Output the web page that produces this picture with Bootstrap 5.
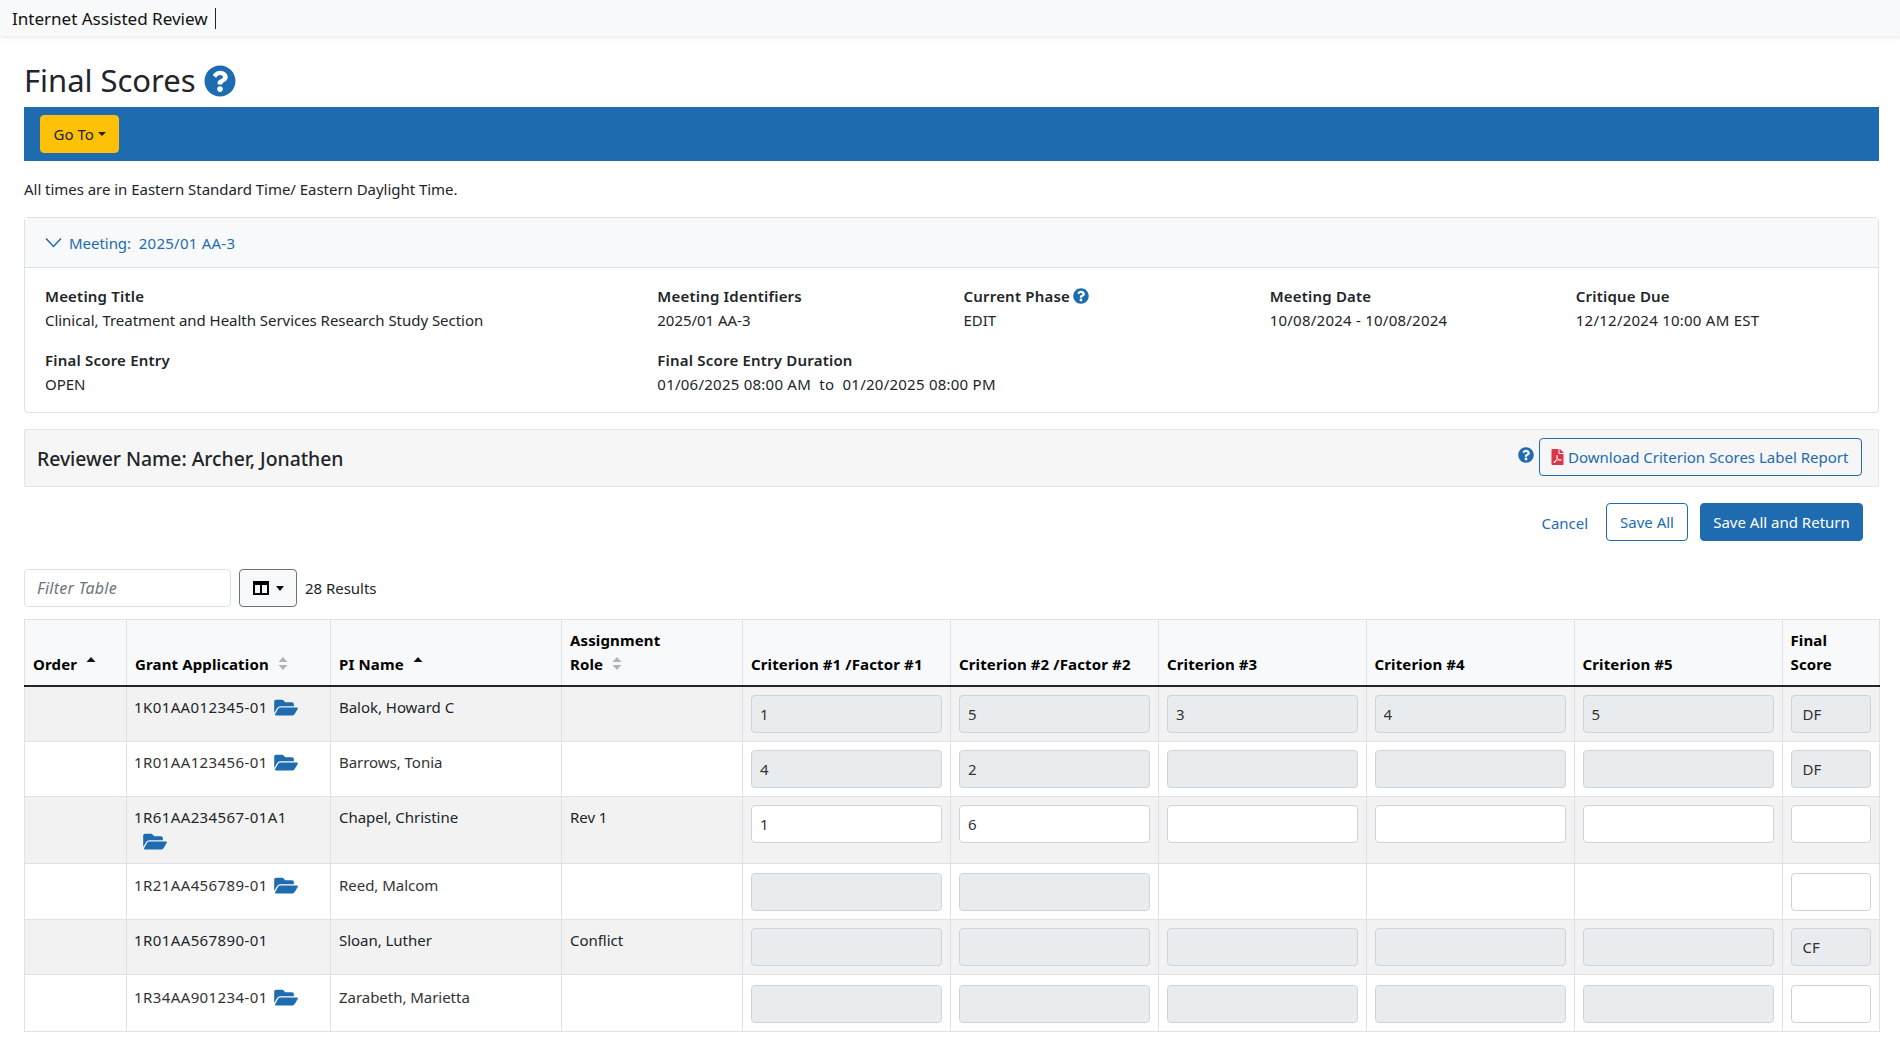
<!DOCTYPE html>
<html lang="en">
<head>
<meta charset="utf-8">
<title>Final Scores</title>
<link href="https://cdn.jsdelivr.net/npm/bootstrap@5.3.0/dist/css/bootstrap.min.css" rel="stylesheet">
<style>
:root{--ink:#212529;--blue:#1e6bb0;--line:#dee2e6;}
body{font-family:"Noto Sans","Open Sans",sans-serif;font-size:15px;color:var(--ink);background:#fff;letter-spacing:-.035px;}
.topbar{height:36px;background:#f8f9fa;box-shadow:0 2px 4px rgba(0,0,0,.08);padding:0 12px;}
.topbar .brand-name{font-size:17.1px;color:#111;padding-right:7px;border-right:1px solid #212529;line-height:21px;}
.page-wrap{padding:25px 21px 0 24px;}
.page-h{font-size:31px;line-height:38px;font-weight:400;margin:0 0 8px;}
.ico-help{fill:var(--blue);display:inline-block;}
.page-h .ico-help{width:32px;height:32px;vertical-align:-5px;margin-left:1px;}
.action-bar{background:var(--blue);padding:8px 16px;height:54px;}
.goto-btn{--bs-btn-bg:#ffc107;--bs-btn-border-color:#ffc107;--bs-btn-color:#212529;--bs-btn-hover-bg:#ffc107;--bs-btn-hover-color:#212529;--bs-btn-border-radius:4px;font-size:15px;height:38px;padding:0 12.5px;}
.tz-note{margin:16px 0 16px;line-height:24px;}
.meet-card{--bs-card-border-color:#dfe1e3;--bs-card-border-radius:4px;height:196px;}
.meet-head{background:#f8f9fa;height:50px;padding:12px 20px;border-bottom:1px solid #dfe1e3;color:var(--blue);line-height:24px;display:flex;align-items:center;}
.meet-head svg{width:17px;height:11px;margin-right:7px;}
.meet-body{padding:16px 8px 0;}
.info-label{font-weight:600;line-height:24px;display:block;letter-spacing:.2px;}
.info-value{line-height:24px;display:block;}
.num-text{letter-spacing:.24px;}
.info-row{margin-bottom:16px;}
.info-label .ico-help{width:16px;height:16px;vertical-align:-2px;margin-left:-1px;}
.reviewer-bar{margin-top:16px;height:58px;background:#f6f6f6;border:1px solid #e4e4e6;border-radius:2px;padding:0 16px 2px 12px;}
.reviewer-name{font-size:19.4px;font-weight:500;margin-top:3px;}
.reviewer-bar .ico-help{width:16px;height:16px;margin-bottom:4px;margin-right:5px;}
.line-btn{--bs-btn-color:var(--blue);--bs-btn-border-color:var(--blue);--bs-btn-bg:#fff;--bs-btn-hover-bg:#fff;--bs-btn-hover-color:var(--blue);--bs-btn-hover-border-color:var(--blue);--bs-btn-border-radius:4px;font-size:15px;height:38px;padding:0 11px;display:inline-flex;align-items:center;}
.reviewer-bar .line-btn{--bs-btn-bg:#f6f6f6;--bs-btn-hover-bg:#f6f6f6;width:323px;white-space:nowrap;}
.pdf-ico{width:13px;height:16px;fill:#dc3545;margin-right:4px;}
.save-row{margin-top:16px;padding-right:16px;}
.plain-link{--bs-btn-color:var(--blue);--bs-btn-hover-color:var(--blue);--bs-btn-padding-x:12px;font-size:15px;text-decoration:none;height:38px;padding-top:8px;padding-bottom:6px;}
.solid-btn{--bs-btn-bg:var(--blue);--bs-btn-border-color:var(--blue);--bs-btn-color:#fff;--bs-btn-hover-bg:var(--blue);--bs-btn-hover-border-color:var(--blue);--bs-btn-hover-color:#fff;--bs-btn-border-radius:4px;font-size:15px;height:38px;width:163px;padding:0;}
.save-btn{width:82px;justify-content:center;margin-left:5px;margin-right:12px;}
.filter-row{margin-top:28px;}
.filter-input{width:207px;height:38px;font-size:16px;letter-spacing:.25px;font-style:italic;padding:6px 12px;border-radius:4px;}
.filter-input::placeholder{color:#6c757d;}
.col-btn{width:58px;height:38px;background:#f8f9fa;border:1px solid #6c757d;border-radius:4px;margin-left:8px;display:flex;align-items:center;justify-content:center;gap:7px;padding:0;}
.col-btn .tri{width:0;height:0;border-left:4.5px solid transparent;border-right:4.5px solid transparent;border-top:5px solid #111;}
.col-btn svg{width:16px;height:14px;}
.result-count{margin-left:8px;}
.score-table{table-layout:fixed;width:1854.5px;margin:12px 0 0;--bs-table-border-color:#dee2e6;color:#333;}
.score-table col:nth-child(1){width:102px;}
.score-table col:nth-child(2){width:204px;}
.score-table col:nth-child(3){width:231px;}
.score-table col:nth-child(4){width:181px;}
.score-table col:nth-child(5),.score-table col:nth-child(6),.score-table col:nth-child(8),.score-table col:nth-child(9){width:208px;}
.score-table col:nth-child(7){width:207.5px;}
.score-table col:nth-child(10){width:97px;}
.score-table th{background:#f8f9fa;--bs-table-accent-bg:transparent;color:#000;font-weight:700;font-size:15px;letter-spacing:.13px;padding:8px 8px 9px;line-height:24px;vertical-align:bottom;border-bottom:2px solid #212529;}
.score-table>thead{border-bottom-color:#212529;}
.score-table td{padding:8px;line-height:24px;vertical-align:top;}
.score-table td.txt{padding-top:8px;}
.score-table tr.row-a td{padding-top:9px;}
.score-table tr.row-b td{padding-top:10px;}
.score-table td.grant-cell{padding-left:7px;letter-spacing:.4px;}
.sort-ico{width:10px;height:14px;vertical-align:0;margin-left:5px;}
.score-box{height:38px;width:100%;font-size:15px;padding:6px 8px;color:#333;border-radius:4px;border:1px solid #ced4da;background:#fff;}
.score-box:disabled{background:#e9ecef;opacity:1;}
.score-box.wide-pad{padding-left:11px;}
.folder-ico{width:24px;height:21px;fill:var(--blue);margin-left:6.5px;vertical-align:-5px;}
.folder-ico.wrap-folder{margin-left:9px;}
.row-gap{display:block;height:2px;}
</style>
</head>
<body>
<nav class="topbar d-flex align-items-center"><span class="brand-name">Internet Assisted Review</span></nav>
<main class="page-wrap">
  <h1 class="page-h">Final Scores <svg class="ico-help" viewBox="0 0 512 512"><path d="M504 256c0 136.997-111.043 248-248 248S8 392.997 8 256C8 119.083 119.043 8 256 8s248 111.083 248 248zM262.655 90c-54.497 0-89.255 22.957-116.549 63.758-3.536 5.286-2.353 12.415 2.715 16.258l34.699 26.31c5.205 3.947 12.621 3.008 16.665-2.122 17.864-22.658 30.113-35.797 57.303-35.797 20.429 0 45.698 13.148 45.698 32.958 0 14.976-12.363 22.667-32.534 33.976C247.128 238.528 216 254.941 216 296v4c0 6.627 5.373 12 12 12h56c6.627 0 12-5.373 12-12v-1.333c0-28.462 83.186-29.647 83.186-106.667 0-58.002-60.165-102-116.531-102zM256 338c-25.365 0-46 20.635-46 46 0 25.364 20.635 46 46 46s46-20.636 46-46c0-25.365-20.635-46-46-46z"/></svg></h1>
  <div class="action-bar"><button class="btn goto-btn dropdown-toggle" type="button">Go To</button></div>
  <p class="tz-note">All times are in Eastern Standard Time/ Eastern Daylight Time.</p>

  <section class="card meet-card">
    <div class="meet-head"><svg viewBox="0 0 17 11"><path d="M1 1.5l7.5 8 7.5-8" fill="none" stroke="#1e6bb0" stroke-width="1.5"/></svg><span>Meeting:&nbsp; <span class="num-text">2025/01 AA-3</span></span></div>
    <div class="meet-body">
      <div class="container-fluid">
        <div class="row info-row">
          <div class="col-4"><span class="info-label">Meeting Title</span><span class="info-value">Clinical, Treatment and Health Services Research Study Section</span></div>
          <div class="col-2"><span class="info-label">Meeting Identifiers</span><span class="info-value">2025/01 AA-3</span></div>
          <div class="col-2"><span class="info-label">Current Phase <svg class="ico-help" viewBox="0 0 512 512"><path d="M504 256c0 136.997-111.043 248-248 248S8 392.997 8 256C8 119.083 119.043 8 256 8s248 111.083 248 248zM262.655 90c-54.497 0-89.255 22.957-116.549 63.758-3.536 5.286-2.353 12.415 2.715 16.258l34.699 26.31c5.205 3.947 12.621 3.008 16.665-2.122 17.864-22.658 30.113-35.797 57.303-35.797 20.429 0 45.698 13.148 45.698 32.958 0 14.976-12.363 22.667-32.534 33.976C247.128 238.528 216 254.941 216 296v4c0 6.627 5.373 12 12 12h56c6.627 0 12-5.373 12-12v-1.333c0-28.462 83.186-29.647 83.186-106.667 0-58.002-60.165-102-116.531-102zM256 338c-25.365 0-46 20.635-46 46 0 25.364 20.635 46 46 46s46-20.636 46-46c0-25.365-20.635-46-46-46z"/></svg></span><span class="info-value">EDIT</span></div>
          <div class="col-2"><span class="info-label">Meeting Date</span><span class="info-value num-text">10/08/2024 - 10/08/2024</span></div>
          <div class="col-2"><span class="info-label">Critique Due</span><span class="info-value num-text">12/12/2024 10:00 AM EST</span></div>
        </div>
        <div class="row">
          <div class="col-4"><span class="info-label">Final Score Entry</span><span class="info-value">OPEN</span></div>
          <div class="col-8"><span class="info-label">Final Score Entry Duration</span><span class="info-value num-text">01/06/2025 08:00 AM &nbsp;to&nbsp; 01/20/2025 08:00 PM</span></div>
        </div>
      </div>
    </div>
  </section>

  <section class="reviewer-bar d-flex align-items-center justify-content-between">
    <span class="reviewer-name">Reviewer Name: Archer, Jonathen</span>
    <span class="d-flex align-items-center">
      <svg class="ico-help" viewBox="0 0 512 512"><path d="M504 256c0 136.997-111.043 248-248 248S8 392.997 8 256C8 119.083 119.043 8 256 8s248 111.083 248 248zM262.655 90c-54.497 0-89.255 22.957-116.549 63.758-3.536 5.286-2.353 12.415 2.715 16.258l34.699 26.31c5.205 3.947 12.621 3.008 16.665-2.122 17.864-22.658 30.113-35.797 57.303-35.797 20.429 0 45.698 13.148 45.698 32.958 0 14.976-12.363 22.667-32.534 33.976C247.128 238.528 216 254.941 216 296v4c0 6.627 5.373 12 12 12h56c6.627 0 12-5.373 12-12v-1.333c0-28.462 83.186-29.647 83.186-106.667 0-58.002-60.165-102-116.531-102zM256 338c-25.365 0-46 20.635-46 46 0 25.364 20.635 46 46 46s46-20.636 46-46c0-25.365-20.635-46-46-46z"/></svg>
      <button class="btn line-btn" type="button"><svg class="pdf-ico" viewBox="0 0 384 512"><path d="M181.9 256.1c-5-16-4.9-46.9-2-46.9 8.4 0 7.6 36.9 2 46.9zm-1.7 47.2c-7.7 20.2-17.3 43.3-28.4 62.7 18.3-7 39-17.2 62.9-21.9-12.7-9.6-24.9-23.4-34.5-40.8zM86.1 428.1c0 .8 13.2-5.4 34.9-40.2-6.7 6.3-29.1 24.5-34.9 40.2zM248 160h136v328c0 13.3-10.7 24-24 24H24c-13.3 0-24-10.7-24-24V24C0 10.7 10.7 0 24 0h200v136c0 13.2 10.8 24 24 24zm-8 171.8c-20-12.2-33.3-29-42.7-53.8 4.5-18.5 11.6-46.6 6.2-64.2-4.7-29.4-42.4-26.5-47.8-6.8-5 18.3-.4 44.1 8.1 77-11.6 27.6-28.7 64.6-40.8 85.8-.1 0-.1.1-.2.1-27.1 13.9-73.6 44.5-54.5 68 5.6 6.9 16 10 21.5 10 17.9 0 35.7-18 61.1-61.8 25.8-8.5 54.1-19.1 79-23.2 21.7 11.8 47.1 19.5 64 19.5 29.2 0 31.2-32 19.7-43.4-13.9-13.6-54.3-9.7-73.6-7.2zM377 105L279 7c-4.5-4.5-10.6-7-17-7h-6v128h128v-6.1c0-6.3-2.5-12.4-7-16.9zm-74.1 255.3c4.1-2.7-2.5-11.9-42.8-9 37.1 15.8 42.8 9 42.8 9z"/></svg>Download Criterion Scores Label Report</button>
    </span>
  </section>

  <div class="save-row d-flex justify-content-end align-items-center">
    <a class="btn plain-link" href="#">Cancel</a>
    <button class="btn line-btn save-btn" type="button">Save All</button>
    <button class="btn solid-btn" type="button">Save All and Return</button>
  </div>

  <div class="filter-row d-flex align-items-center">
    <input class="form-control filter-input" type="text" placeholder="Filter Table">
    <button class="col-btn" type="button"><svg viewBox="0 0 16 14"><path d="M0 0h16v14H0zM2 4v8h5V4zm7 0v8h5V4z" fill="#000" fill-rule="evenodd"/></svg><span class="tri"></span></button>
    <span class="result-count">28 Results</span>
  </div>

  <table class="table table-bordered table-striped score-table">
    <colgroup><col><col><col><col><col><col><col><col><col><col></colgroup>
    <thead>
      <tr>
        <th>Order <svg class="sort-ico" viewBox="0 0 10 14"><path d="M5 1l4.5 5H.5z" fill="#111"/></svg></th>
        <th>Grant Application <svg class="sort-ico" viewBox="0 0 10 14"><path d="M5 1l4.5 5H.5z" fill="#adb5bd"/><path d="M5 14L.5 9h9z" fill="#adb5bd"/></svg></th>
        <th>PI Name <svg class="sort-ico" viewBox="0 0 10 14"><path d="M5 1l4.5 5H.5z" fill="#111"/></svg></th>
        <th>Assignment<br>Role <svg class="sort-ico" viewBox="0 0 10 14"><path d="M5 1l4.5 5H.5z" fill="#adb5bd"/><path d="M5 14L.5 9h9z" fill="#adb5bd"/></svg></th>
        <th>Criterion #1 /Factor #1</th>
        <th>Criterion #2 /Factor #2</th>
        <th>Criterion #3</th>
        <th>Criterion #4</th>
        <th>Criterion #5</th>
        <th>Final<br>Score</th>
      </tr>
    </thead>
    <tbody>
      <tr>
        <td></td>
        <td class="txt grant-cell">1K01AA012345-01<svg class="folder-ico" viewBox="0 0 576 512"><path d="M572.694 292.093L500.27 416.248A63.997 63.997 0 0 1 444.989 448H45.025c-18.523 0-30.064-20.093-20.731-36.093l72.424-124.155A64 64 0 0 1 152 256h399.964c18.523 0 30.064 20.093 20.73 36.093zM152 224h328v-48c0-26.51-21.49-48-48-48H272l-64-64H48C21.49 64 0 85.49 0 112v278.046l69.077-118.418C86.214 242.25 117.989 224 152 224z"/></svg></td>
        <td class="txt">Balok, Howard C</td><td class="txt"></td>
        <td><input class="score-box" disabled value="1"></td><td><input class="score-box" disabled value="5"></td><td><input class="score-box" disabled value="3"></td><td><input class="score-box" disabled value="4"></td><td><input class="score-box" disabled value="5"></td><td><input class="score-box wide-pad" disabled value="DF"></td>
      </tr>
      <tr>
        <td></td>
        <td class="txt grant-cell">1R01AA123456-01<svg class="folder-ico" viewBox="0 0 576 512"><path d="M572.694 292.093L500.27 416.248A63.997 63.997 0 0 1 444.989 448H45.025c-18.523 0-30.064-20.093-20.731-36.093l72.424-124.155A64 64 0 0 1 152 256h399.964c18.523 0 30.064 20.093 20.73 36.093zM152 224h328v-48c0-26.51-21.49-48-48-48H272l-64-64H48C21.49 64 0 85.49 0 112v278.046l69.077-118.418C86.214 242.25 117.989 224 152 224z"/></svg></td>
        <td class="txt">Barrows, Tonia</td><td class="txt"></td>
        <td><input class="score-box" disabled value="4"></td><td><input class="score-box" disabled value="2"></td><td><input class="score-box" disabled></td><td><input class="score-box" disabled></td><td><input class="score-box" disabled></td><td><input class="score-box wide-pad" disabled value="DF"></td>
      </tr>
      <tr>
        <td></td>
        <td class="txt grant-cell">1R61AA234567-01A1<br><svg class="folder-ico wrap-folder" viewBox="0 0 576 512"><path d="M572.694 292.093L500.27 416.248A63.997 63.997 0 0 1 444.989 448H45.025c-18.523 0-30.064-20.093-20.731-36.093l72.424-124.155A64 64 0 0 1 152 256h399.964c18.523 0 30.064 20.093 20.73 36.093zM152 224h328v-48c0-26.51-21.49-48-48-48H272l-64-64H48C21.49 64 0 85.49 0 112v278.046l69.077-118.418C86.214 242.25 117.989 224 152 224z"/></svg><span class="row-gap"></span></td>
        <td class="txt">Chapel, Christine</td><td class="txt">Rev 1</td>
        <td><input class="score-box" value="1"></td><td><input class="score-box" value="6"></td><td><input class="score-box"></td><td><input class="score-box"></td><td><input class="score-box"></td><td><input class="score-box"></td>
      </tr>
      <tr class="row-a">
        <td></td>
        <td class="txt grant-cell">1R21AA456789-01<svg class="folder-ico" viewBox="0 0 576 512"><path d="M572.694 292.093L500.27 416.248A63.997 63.997 0 0 1 444.989 448H45.025c-18.523 0-30.064-20.093-20.731-36.093l72.424-124.155A64 64 0 0 1 152 256h399.964c18.523 0 30.064 20.093 20.73 36.093zM152 224h328v-48c0-26.51-21.49-48-48-48H272l-64-64H48C21.49 64 0 85.49 0 112v278.046l69.077-118.418C86.214 242.25 117.989 224 152 224z"/></svg></td>
        <td class="txt">Reed, Malcom</td><td class="txt"></td>
        <td><input class="score-box" disabled></td><td><input class="score-box" disabled></td><td></td><td></td><td></td><td><input class="score-box"></td>
      </tr>
      <tr>
        <td></td>
        <td class="txt grant-cell">1R01AA567890-01</td>
        <td class="txt">Sloan, Luther</td><td class="txt">Conflict</td>
        <td><input class="score-box" disabled></td><td><input class="score-box" disabled></td><td><input class="score-box" disabled></td><td><input class="score-box" disabled></td><td><input class="score-box" disabled></td><td><input class="score-box wide-pad" disabled value="CF"></td>
      </tr>
      <tr class="row-b">
        <td></td>
        <td class="txt grant-cell">1R34AA901234-01<svg class="folder-ico" viewBox="0 0 576 512"><path d="M572.694 292.093L500.27 416.248A63.997 63.997 0 0 1 444.989 448H45.025c-18.523 0-30.064-20.093-20.731-36.093l72.424-124.155A64 64 0 0 1 152 256h399.964c18.523 0 30.064 20.093 20.73 36.093zM152 224h328v-48c0-26.51-21.49-48-48-48H272l-64-64H48C21.49 64 0 85.49 0 112v278.046l69.077-118.418C86.214 242.25 117.989 224 152 224z"/></svg></td>
        <td class="txt">Zarabeth, Marietta</td><td class="txt"></td>
        <td><input class="score-box" disabled></td><td><input class="score-box" disabled></td><td><input class="score-box" disabled></td><td><input class="score-box" disabled></td><td><input class="score-box" disabled></td><td><input class="score-box"></td>
      </tr>
    </tbody>
  </table>
</main>
<script src="https://cdn.jsdelivr.net/npm/bootstrap@5.3.0/dist/js/bootstrap.bundle.min.js"></script>
</body>
</html>
